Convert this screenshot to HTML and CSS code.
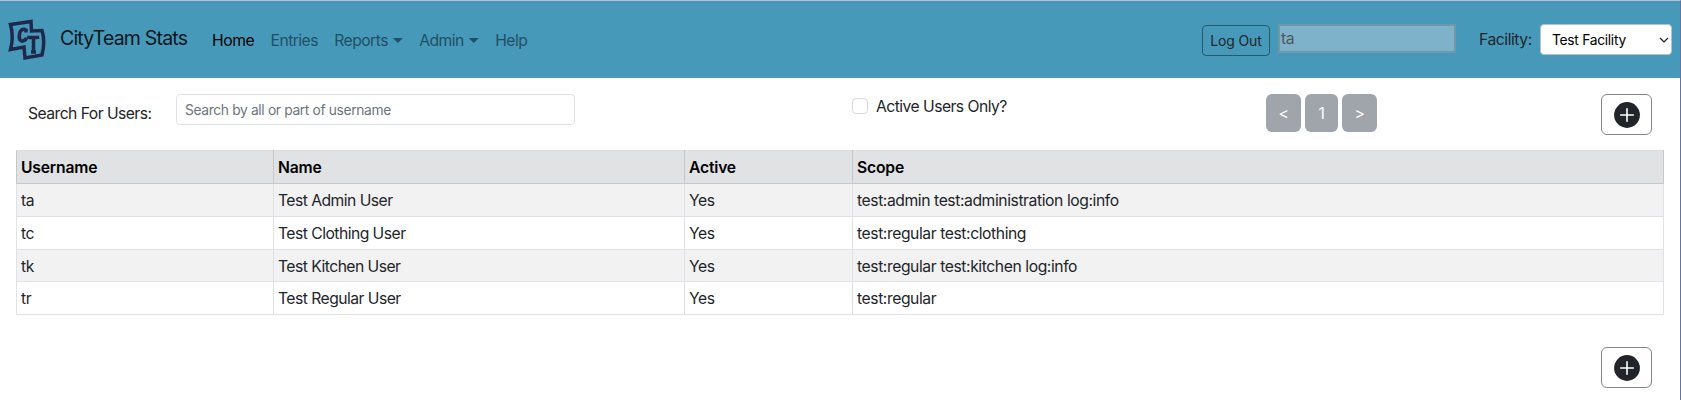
FILE: index.html
```html
<!DOCTYPE html>
<html lang="en">
<head>
<meta charset="utf-8">
<title>CityTeam Stats</title>
<link rel="stylesheet" href="styles.css">
</head>
<body>
<div class="window">
<header class="navbar">
  <svg class="logo" viewBox="0 0 38 42" fill="none" stroke="#20294b" stroke-width="3.500">
    <path d="M2.500 5.500 23 2.500 23.500 12 34 11.500Q37.500 22 34 36L17 39 16 28 2.500 30.500Q6 18 2.500 5.500Z"/>
    <path d="M18 13.500V11Q14 9 12 13Q10.500 18 12 21Q15 23.500 18 20V18.500"/>
    <path d="M21 20V18.500H29.500V20M25.500 18.500V33M23 33H28"/>
  </svg>
  <span class="brand">CityTeam Stats</span>
  <nav class="links">
    <a class="link active">Home</a>
    <a class="link">Entries</a>
    <a class="link">Reports<i class="caret"></i></a>
    <a class="link">Admin<i class="caret"></i></a>
    <a class="link">Help</a>
  </nav>
  <button class="logout">Log Out</button>
  <div class="current-user">ta</div>
  <span class="facility-label">Facility:</span>
  <div class="facility"><span>Test Facility</span><svg width="10" height="8" viewBox="0 0 10 8" fill="none" stroke="#222" stroke-width="1.2"><path d="M1 2 5 6 9 2"/></svg></div>
</header>
<main class="content">
  <div class="toolbar">
    <label class="search-label">Search For Users:</label>
    <div class="search">Search by all or part of username</div>
    <div class="check"><i class="box"></i><span class="check-label">Active Users Only?</span></div>
    <div class="pager"><button class="page">&lt;</button><button class="page number">1</button><button class="page">&gt;</button></div>
    <button class="add"><svg width="26" height="26" viewBox="0 0 26 26"><circle cx="13" cy="13" r="12.900" fill="#212529"/><path d="M13 6.700V19.300M6.700 13H19.300" stroke="#fff" stroke-width="1.600" stroke-linecap="round"/></svg></button>
  </div>
  <table class="users">
    <colgroup><col class="col-user"><col class="col-name"><col class="col-active"><col></colgroup>
    <thead><tr><th>Username</th><th>Name</th><th>Active</th><th>Scope</th></tr></thead>
    <tbody>
      <tr><td>ta</td><td>Test Admin User</td><td>Yes</td><td>test:admin test:administration log:info</td></tr>
      <tr><td>tc</td><td>Test Clothing User</td><td>Yes</td><td>test:regular test:clothing</td></tr>
      <tr><td>tk</td><td>Test Kitchen User</td><td>Yes</td><td>test:regular test:kitchen log:info</td></tr>
      <tr><td>tr</td><td>Test Regular User</td><td>Yes</td><td>test:regular</td></tr>
    </tbody>
  </table>
  <div class="footer">
    <button class="add"><svg width="26" height="26" viewBox="0 0 26 26"><circle cx="13" cy="13" r="12.900" fill="#212529"/><path d="M13 6.700V19.300M6.700 13H19.300" stroke="#fff" stroke-width="1.600" stroke-linecap="round"/></svg></button>
  </div>
</main>
</div>
</body>
</html>
```
FILE: styles.css
```css
* { box-sizing: border-box; }
body { margin: 0; font: 15.700px/24px Inter, "Liberation Sans", sans-serif; letter-spacing: -0.45px; color: #212529; background: #fff; overflow: hidden; }
button { font: inherit; letter-spacing: inherit; padding: 0; margin: 0; }
.window { height: 400px; border-top: 1px solid #b9bdd2; border-right: 1px solid #6374a0; }
.navbar { display: flex; align-items: flex-start; height: 77px; background: #4799ba; white-space: nowrap; }
.logo { width: 38px; height: 42px; margin: 18px 0 0 8px; flex: none; }
.brand { width: 152px; margin: 22px 0 0 14px; font-size: 19.500px; line-height: 30px; letter-spacing: -0.82px; color: #07171c; }
.links { display: flex; gap: 16.400px; margin-top: 28px; flex: 1; }
.link { display: flex; color: #205064; letter-spacing: -0.55px; }
.link.active { color: #000; letter-spacing: -0.45px; }
.caret { width: 10px; height: 5px; margin: 9px 0 0 5px; background: currentColor; clip-path: polygon(0 0, 100% 0, 50% 100%); }
.logout { width: 68px; height: 31px; margin: 24px 8px 0 0; background: transparent; border: 1px solid #28596c; border-radius: 4px; font-size: 14px; letter-spacing: -0.15px; color: #212529; }
.current-user { width: 178px; height: 29px; margin-top: 23px; padding: 1px; border: 2px solid #7198a9; background: #7eb2ca; color: #4d585d; }
.facility-label { width: 61px; margin: 27px 0 0 23px; }
.facility { display: flex; align-items: center; justify-content: space-between; width: 132px; height: 31px; margin: 23px 8px 0 0; padding: 0 2px 0 11px; border: 1px solid #b5c4cc; border-radius: 4px; background: #fff; color: #000; font-size: 13.800px; letter-spacing: -0.28px; }
.content { padding: 16px 16px 0; }
.toolbar { display: flex; align-items: flex-start; height: 56px; padding-left: 12px; white-space: nowrap; }
.search-label { width: 148px; margin-top: 8px; letter-spacing: -0.54px; }
.search { width: 399px; height: 31px; padding: 3px 8px; border: 1px solid #dee2e6; border-radius: 4px; font-size: 13.800px; letter-spacing: -0.35px; color: #6c757d; }
.check { display: flex; width: 414px; margin-left: 277px; gap: 8px; }
.check-label { margin-top: 1px; letter-spacing: -0.54px; }
.box { width: 16px; height: 16px; margin-top: 4px; border: 1px solid #d8d9db; border-radius: 4px; }
.pager { display: flex; gap: 4px; }
.page { width: 35px; height: 38px; padding-top: 2px; border: 0; border-radius: 6px; background: #a0a5ab; color: #fff; }
.page.number { width: 33px; }
.add { display: flex; align-items: center; justify-content: center; width: 51px; height: 41px; margin: 0 12px 0 auto; border: 1px solid #828588; border-radius: 6px; background: #fff; }
.users { width: 1648px; table-layout: fixed; border-collapse: collapse; }
.col-user { width: 257px; }
.col-name { width: 411px; }
.col-active { width: 168px; }
.users th, .users td { padding: 5px 4px 3px; border: 1px solid #dee2e6; text-align: left; vertical-align: middle; }
.users td { letter-spacing: -0.42px; }
.users td:nth-child(2) { letter-spacing: -0.53px; }
.users th { background: #e1e2e4; color: #000; border-color: #c6c7c8; border-top-color: #dcdde0; font-weight: 600; letter-spacing: -0.2px; }
.users tbody tr:nth-child(odd) { background: #f2f2f2; }
.users tbody tr:nth-child(3) { line-height: 23px; }
.footer { display: flex; margin-top: 32px; }
```
